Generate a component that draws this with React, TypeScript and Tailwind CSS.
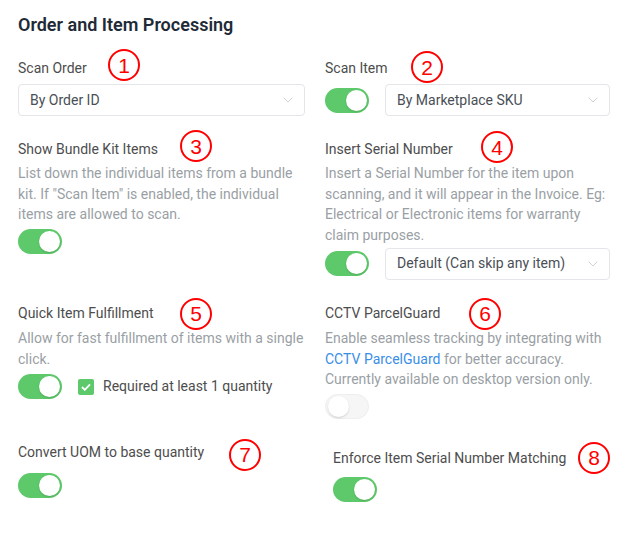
import { ChevronDown } from "lucide-react";

function Marker({ n, className }: { n: number; className: string }) {
  return (
    <span
      className={`absolute top-1/2 flex h-[32px] w-[32px] items-center justify-center rounded-full border-2 border-[#ff0000] text-[21px] leading-none text-[#ff0000] ${className}`}
      style={{ fontFamily: '"Liberation Sans", Arial, sans-serif' }}
    >
      {n}
    </span>
  );
}

function Label({ text, children }: { text: string; children?: React.ReactNode }) {
  return (
    <div className="relative flex h-[20px] items-center whitespace-nowrap text-[14px] text-[#4d4d4d]">
      {text}
      {children}
    </div>
  );
}

function Toggle({ on = true }: { on?: boolean }) {
  return (
    <div
      className={`flex h-[25px] w-[44px] shrink-0 items-center rounded-full px-[2px] ${
        on ? "justify-end bg-[#5dc96a]" : "justify-start border border-[#eeeeee] bg-[#f6f6f6]"
      }`}
    >
      <div className="h-[21px] w-[21px] rounded-full bg-white shadow-[0_1px_2px_rgba(0,0,0,0.15)]" />
    </div>
  );
}

function Select({ value, className = "" }: { value: string; className?: string }) {
  return (
    <div
      className={`flex h-[32px] items-center justify-between rounded-[4px] border border-[#e3e5e8] bg-white pl-[11px] pr-[8px] text-[14px] text-[#4a4f55] ${className}`}
    >
      <span>{value}</span>
      <ChevronDown size={16} strokeWidth={1.2} className="text-[#c4c7cc]" />
    </div>
  );
}

function Desc({ children }: { children: React.ReactNode }) {
  return <div className="mt-[4px] text-[14px] leading-[20.7px] text-[#9a9fa5]">{children}</div>;
}

export default function App() {
  return (
    <div
      className="min-h-[538px] w-[633px] bg-white px-[18px] pt-[13px]"
      style={{ fontFamily: 'Roboto, "Noto Sans", sans-serif' }}
    >
      <h1 className="text-[18px] font-semibold leading-[24px] text-[#1f2a37]">
        Order and Item Processing
      </h1>

      <div className="mt-[21px] grid grid-cols-[287px_285px] gap-x-[20px]">
        {/* row 1 */}
        <div>
          <Label text="Scan Order">
            <Marker n={1} className="left-[90px] -translate-y-[19px]" />
          </Label>
          <Select value="By Order ID" className="mt-[6px]" />
        </div>
        <div>
          <Label text="Scan Item">
            <Marker n={2} className="left-[86px] -translate-y-[17px]" />
          </Label>
          <div className="mt-[6px] flex items-center gap-[16px]">
            <Toggle />
            <Select value="By Marketplace SKU" className="w-[225px]" />
          </div>
        </div>

        {/* row 2 */}
        <div className="mt-[23px]">
          <Label text="Show Bundle Kit Items">
            <Marker n={3} className="left-[162px] -translate-y-[19px]" />
          </Label>
          <Desc>
            List down the individual items from a bundle kit. If "Scan Item" is enabled, the
            individual items are allowed to scan.
          </Desc>
          <div className="mt-[4px]">
            <Toggle />
          </div>
        </div>
        <div className="mt-[23px]">
          <Label text="Insert Serial Number">
            <Marker n={4} className="left-[156px] -translate-y-[18px]" />
          </Label>
          <Desc>
            Insert a Serial Number for the item upon scanning, and it will appear in the
            Invoice. Eg: Electrical or Electronic items for warranty claim purposes.
          </Desc>
          <div className="mt-[2px] flex items-center gap-[16px]">
            <Toggle />
            <Select value="Default (Can skip any item)" className="w-[225px]" />
          </div>
        </div>

        {/* row 3 */}
        <div className="mt-[24px]">
          <Label text="Quick Item Fulfillment">
            <Marker n={5} className="left-[162px] -translate-y-[16px]" />
          </Label>
          <Desc>Allow for fast fulfillment of items with a single click.</Desc>
          <div className="mt-[5px] flex items-center gap-[16px]">
            <Toggle />
            <div className="flex items-center gap-[9px] text-[14px] text-[#4d4d4d]">
              <span className="flex h-[16px] w-[16px] items-center justify-center rounded-[2px] bg-[#5dc96a]">
                <svg width="10" height="8" viewBox="0 0 10 8" fill="none">
                  <path d="M1 4l2.8 2.8L9 1.3" stroke="white" strokeWidth="1.8" />
                </svg>
              </span>
              Required at least 1 quantity
            </div>
          </div>
        </div>
        <div className="mt-[24px]">
          <Label text="CCTV ParcelGuard">
            <Marker n={6} className="left-[144px] -translate-y-[16px]" />
          </Label>
          <Desc>
            <div>Enable seamless tracking by integrating with</div>
            <div>
              <span className="text-[#3a8ee6]">CCTV ParcelGuard</span> for better accuracy.
            </div>
            <div>Currently available on desktop version only.</div>
          </Desc>
          <div className="mt-[4px]">
            <Toggle on={false} />
          </div>
        </div>

        {/* row 4 */}
        <div className="mt-[24px]">
          <Label text="Convert UOM to base quantity">
            <Marker n={7} className="left-[211px] -translate-y-[14px]" />
          </Label>
          <div className="mt-[10px]">
            <Toggle />
          </div>
        </div>
        <div className="ml-[8px] mt-[30px]">
          <Label text="Enforce Item Serial Number Matching">
            <Marker n={8} className="left-[245px] -translate-y-[17px]" />
          </Label>
          <div className="mt-[8px]">
            <Toggle />
          </div>
        </div>
      </div>
    </div>
  );
}
